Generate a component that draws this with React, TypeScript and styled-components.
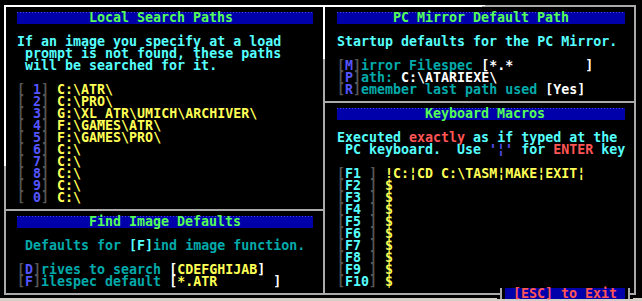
import React from "react";
import styled, { createGlobalStyle } from "styled-components";

const pal = {
  blue: "#0000aa",
  lightBlue: "#5555ff",
  cyan: "#00aaaa",
  lightCyan: "#55ffff",
  green: "#55ff55",
  yellow: "#ffff55",
  white: "#ffffff",
  grey: "#555555",
  silver: "#aaaaaa",
  red: "#ff5555",
};

const GlobalStyle = createGlobalStyle`
  html, body { margin: 0; padding: 0; background: #000; }
  body { overflow: hidden; }
`;

const Screen = styled.div`
  width: 642px;
  height: 301px;
  background: #000;
  display: flex;
  flex-direction: column;
  font-family: "DejaVu Sans Mono", "Liberation Mono", monospace;
  font-weight: bold;
  font-size: 13.3px;
  line-height: 12px;
`;

// border lines are the frame background showing through padding and gaps
const Frame = styled.div`
  position: relative;
  box-sizing: border-box;
  margin: 5px 0 0 4px;
  width: 632px;
  height: 290px;
  padding: 2px;
  background: linear-gradient(161.5deg, ${pal.white} 153px, ${pal.silver} 153px);
  display: grid;
  grid-template-columns: 317px 1fr;
  gap: 2px;
`;

const Column = styled.div`
  display: flex;
  flex-direction: column;
  gap: 2px;
  min-height: 0;
`;

const Panel = styled.div<{ $side: "left" | "right"; $fill?: boolean }>`
  background: #000;
  padding: ${(p) => (p.$side === "left" ? "5px 10px 5px 11px" : "5px 9px 5px 12px")};
  flex: ${(p) => (p.$fill ? 1 : "none")};
`;

const Line = styled.div`
  height: 12px;
  white-space: pre;
`;

const TitleBar = styled.div<{ $indent: number }>`
  height: 12px;
  white-space: pre;
  color: ${pal.green};
  padding-left: ${(p) => p.$indent * 8}px;
  background:
    linear-gradient(90deg, #4848e0 1px, transparent 1px) 0 0 / 3px 1px repeat-x,
    ${pal.blue};
`;

const Tone = styled.span<{ $c: string }>`
  color: ${(p) => p.$c};
`;

const Strip = styled.div`
  margin-top: 3px;
  height: 3px;
  background: #d4d0c8;
`;

const ExitTab = styled.div`
  position: absolute;
  left: 493px;
  top: 283px;
  height: 11px;
  display: flex;
`;

const Tick = styled.span<{ $dir: "left" | "right" }>`
  width: 8px;
  height: 100%;
  background:
    linear-gradient(${pal.silver}, ${pal.silver}) 3px 0 / 2px 100% no-repeat,
    linear-gradient(${pal.silver}, ${pal.silver})
      ${(p) => (p.$dir === "left" ? "0 5px / 5px 2px" : "3px 5px / 5px 2px")} no-repeat,
    #000;
`;

const ExitLabel = styled.span`
  width: 120px;
  background: ${pal.blue};
  color: ${pal.red};
  white-space: pre;
`;

const Hot = ({ k, c = pal.lightBlue }: { k: string; c?: string }) => (
  <>
    <Tone $c={pal.grey}>[</Tone>
    <Tone $c={c}>{k}</Tone>
    <Tone $c={pal.grey}>]</Tone>
  </>
);

const paths: [string, string][] = [
  ["1", "C:\\ATR\\"],
  ["2", "C:\\PRO\\"],
  ["3", "G:\\XL_ATR\\UMICH\\ARCHIVER\\"],
  ["4", "F:\\GAMES\\ATR\\"],
  ["5", "F:\\GAMES\\PRO\\"],
  ["6", "C:\\"],
  ["7", "C:\\"],
  ["8", "C:\\"],
  ["9", "C:\\"],
  ["0", "C:\\"],
];

const macros = [
  "!C:¦CD C:\\TASM¦MAKE¦EXIT¦",
  "$",
  "$",
  "$",
  "$",
  "$",
  "$",
  "$",
  "$",
  "$",
];

const App = () => {
  return (
    <>
      <GlobalStyle />
      <Screen>
        <Frame>
          <Column>
            <Panel $side="left">
              <TitleBar $indent={9}>Local Search Paths</TitleBar>
              <Line />
              <Line>
                <Tone $c={pal.lightCyan}>If an image you specify at a load</Tone>
              </Line>
              <Line>
                <Tone $c={pal.lightCyan}> prompt is not found, these paths</Tone>
              </Line>
              <Line>
                <Tone $c={pal.lightCyan}> will be searched for it.</Tone>
              </Line>
              <Line />
              {paths.map(([n, p]) => (
                <Line key={n}>
                  <Hot k={" " + n} />
                  <Tone $c={pal.yellow}> {p}</Tone>
                </Line>
              ))}
            </Panel>
            <Panel $side="left" $fill>
              <TitleBar $indent={9}>Find Image Defaults</TitleBar>
              <Line />
              <Line>
                <Tone $c={pal.cyan}> Defaults for </Tone>
                <Tone $c={pal.lightCyan}>[F]</Tone>
                <Tone $c={pal.cyan}>ind image function.</Tone>
              </Line>
              <Line />
              <Line>
                <Hot k="D" />
                <Tone $c={pal.cyan}>rives to search </Tone>
                <Tone $c={pal.white}>[</Tone>
                <Tone $c={pal.yellow}>CDEFGHIJAB</Tone>
                <Tone $c={pal.white}>]</Tone>
              </Line>
              <Line>
                <Hot k="F" />
                <Tone $c={pal.cyan}>ilespec default </Tone>
                <Tone $c={pal.white}>[</Tone>
                <Tone $c={pal.yellow}>{"*.ATR".padEnd(12)}</Tone>
                <Tone $c={pal.white}>]</Tone>
              </Line>
            </Panel>
          </Column>

          <Column>
            <Panel $side="right">
              <TitleBar $indent={7}>PC Mirror Default Path</TitleBar>
              <Line />
              <Line>
                <Tone $c={pal.lightCyan}>Startup defaults for the PC Mirror.</Tone>
              </Line>
              <Line />
              <Line>
                <Hot k="M" />
                <Tone $c={pal.cyan}>irror Filespec </Tone>
                <Tone $c={pal.white}>[{"*.*".padEnd(12)}]</Tone>
              </Line>
              <Line>
                <Hot k="P" />
                <Tone $c={pal.cyan}>ath: </Tone>
                <Tone $c={pal.white}>C:\ATARIEXE\</Tone>
              </Line>
              <Line>
                <Hot k="R" />
                <Tone $c={pal.cyan}>emember last path used </Tone>
                <Tone $c={pal.white}>[Yes]</Tone>
              </Line>
            </Panel>
            <Panel $side="right" $fill>
              <TitleBar $indent={11}>Keyboard Macros</TitleBar>
              <Line />
              <Line>
                <Tone $c={pal.lightCyan}>Executed </Tone>
                <Tone $c={pal.red}>exactly</Tone>
                <Tone $c={pal.lightCyan}> as if typed at the</Tone>
              </Line>
              <Line>
                <Tone $c={pal.lightCyan}> PC keyboard.  Use </Tone>
                <Tone $c={pal.lightBlue}>'¦'</Tone>
                <Tone $c={pal.lightCyan}> for </Tone>
                <Tone $c={pal.red}>ENTER</Tone>
                <Tone $c={pal.lightCyan}> key</Tone>
              </Line>
              <Line />
              {macros.map((m, i) => (
                <Line key={i}>
                  <Hot k={`F${i + 1}`.padEnd(3)} c={pal.lightCyan} />
                  <Tone $c={pal.yellow}> {m}</Tone>
                </Line>
              ))}
            </Panel>
          </Column>

          <ExitTab>
            <Tick $dir="left" />
            <ExitLabel> [ESC] to Exit </ExitLabel>
            <Tick $dir="right" />
          </ExitTab>
        </Frame>
        <Strip />
      </Screen>
    </>
  );
};

export default App;
